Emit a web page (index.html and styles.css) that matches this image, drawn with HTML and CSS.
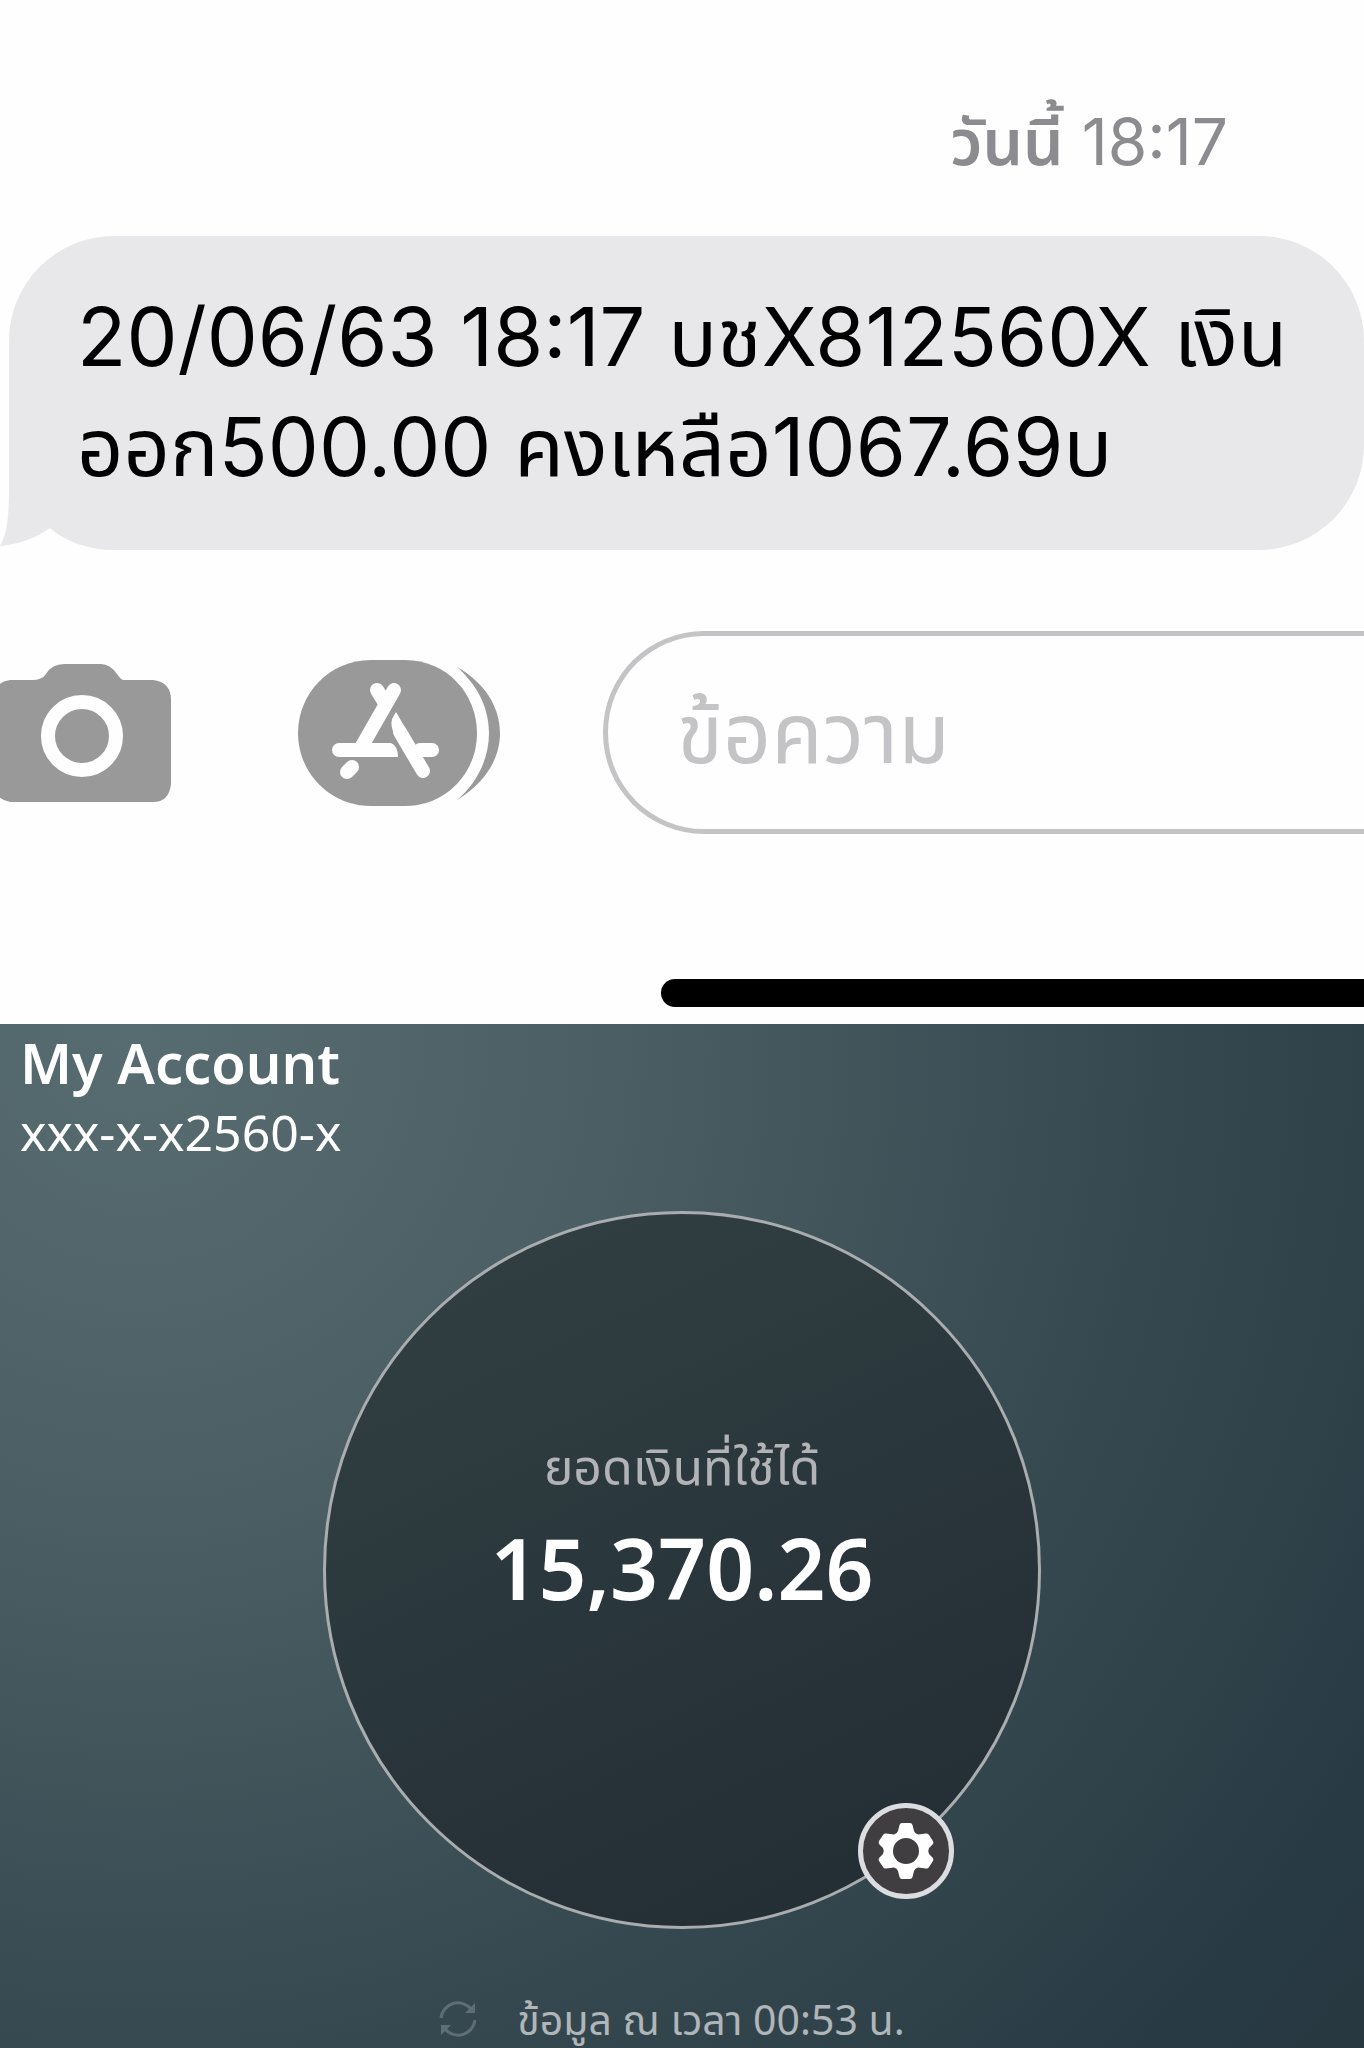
FILE: index.html
```
<!DOCTYPE html>
<html lang="th">
<head>
    <meta charset="UTF-8">
    <meta name="viewport" content="width=device-width, initial-scale=1.0">
    <title>My Account</title>
    <link rel="stylesheet" href="styles.css">
</head>
<body>

<section class="messages">
    <time class="message-time"><b>วันนี้</b> 18:17</time>

    <div class="bubble">
        <svg class="bubble-tail" viewBox="0 0 110 120" aria-hidden="true">
            <path d="M9 0V54C9 84 8 102 0 116C20 114 36 108 50 98C66 112 84 118 110 120V0Z"/>
        </svg>
        <p>20/06/63 18:17 บชX812560X เงิน<br>ออก500.00 คงเหลือ1067.69บ</p>
    </div>

    <form class="compose">
        <button type="button" class="icon-button" aria-label="Camera">
            <svg class="camera-icon" viewBox="0 0 171 146">
                <path d="M10 20H32Q42 20 46 14Q52 4 64 4H101Q110 4 117 14Q121 20 124 20H153Q171 22 171 40V124Q169 142 153 142H10Q-4 140-8 124V40Q-6 22 10 20Z"/>
                <ellipse class="camera-ring" cx="82" cy="76" rx="34" ry="34"/>
            </svg>
        </button>
        <button type="button" class="icon-button" aria-label="Apps">
            <svg class="apps-icon" viewBox="0 0 202 146">
                <path d="M73 0H107C149 0 179 34 179 73S149 146 107 146H73C31 146 0 112 0 73S31 0 73 0Z"/>
                <path d="M159 7C187 23 202 47 202 73S187 123 159 140C177 125 191 101 191 73S177 23 159 7Z"/>
                <g class="apps-lines">
                    <path d="M79 30L87 43M96 30L64 86"/>
                    <path d="M41 90H90M122 90H134"/>
                    <path d="M102 72L125 111"/>
                    <path d="M54 107L49 112"/>
                </g>
                <path class="apps-fill" d="M98 52L108 69L97 76Q92 66 94 59ZM88 83H93Q100 86 100 97H88Z"/>
            </svg>
        </button>
        <input class="message-input" type="text" placeholder="ข้อความ" aria-label="ข้อความ">
    </form>

    <div class="home-bar"></div>
</section>

<section class="account">
    <header>
        <h1>My Account</h1>
        <p class="account-number">xxx-x-x2560-x</p>
    </header>

    <div class="balance">
        <p class="balance-label">ยอดเงินที่ใช้ได้</p>
        <p class="balance-amount">15,370.26</p>
        <button type="button" class="settings" aria-label="Settings">
            <svg viewBox="0 0 60 60">
                <path d="M26 2H34Q36 2 36.500 4L38 10Q39 13 42 13.500L50 12.500Q52 12 53 14L57 20Q58 22 56.500 23.500L53 27Q51.500 30 53 33L56.500 36.500Q58 38 57 40L53 46Q52 48 50 47.500L42 46.500Q39 47 38 50L36.500 56Q36 58 34 58H26Q24 58 23.500 56L22 50Q21 47 18 46.500L10 47.500Q8 48 7 46L3 40Q2 38 3.500 36.500L7 33Q8.500 30 7 27L3.500 23.500Q2 22 3 20L7 14Q8 12 10 12.500L18 13.500Q21 13 22 10L23.500 4Q24 2 26 2Z"/>
                <circle class="gear-hole" cx="30" cy="30" r="13"/>
            </svg>
        </button>
    </div>

    <footer class="updated">
        <button type="button" class="refresh" aria-label="Refresh">
            <svg viewBox="0 0 38 38">
                <path class="refresh-arc" d="M2 18A17 17 0 0 1 32 9M36 20A17 17 0 0 1 6 29"/>
                <path d="M36 3V13H26ZM2 35V25H12Z"/>
            </svg>
        </button>
        <span>ข้อมูล ณ เวลา 00:53 น.</span>
    </footer>
</section>

</body>
</html>
```

FILE: styles.css
```
* {
    box-sizing: border-box;
}
body {
    margin: 0;
    min-height: 100vh;
    display: flex;
    flex-direction: column;
    overflow-x: hidden;
    background-color: #fefefe;
    font-family: Inter, "Noto Sans Thai", "Noto Sans", sans-serif;
}
h1, p {
    margin: 0;
}
button {
    padding: 0;
    border: none;
    background: none;
    cursor: pointer;
}
svg {
    display: block;
}

/* Messages */
.messages {
    display: flex;
    flex-direction: column;
    padding-top: 96px;
}
.message-time {
    align-self: flex-end;
    margin-right: 136px;
    color: #8b8b90;
    font-size: 64px;
    line-height: 92px;
}
.message-time b {
    font-weight: 600;
}
.bubble {
    position: relative;
    margin: 48px 0 81px 9px;
    padding: 46px 0 48px 68px;
    border-radius: 105px;
    background-color: #e8e8ea;
    color: #000;
    font-size: 81px;
    line-height: 110px;
    white-space: nowrap;
}
.bubble-tail {
    position: absolute;
    left: -9px;
    bottom: 0;
    width: 110px;
    height: 120px;
    fill: #e8e8ea;
}
.bubble p {
    position: relative;
}
.compose {
    display: flex;
    align-items: center;
}
.icon-button {
    flex: none;
    fill: #999;
}
.camera-icon {
    width: 171px;
    height: 146px;
}
.camera-ring {
    fill: none;
    stroke: #fefefe;
    stroke-width: 14;
}
.apps-icon {
    width: 202px;
    height: 146px;
    margin: 0 103px 0 127px;
}
.apps-lines {
    fill: none;
    stroke: #fefefe;
    stroke-width: 14;
    stroke-linecap: round;
}
.apps-fill {
    fill: #fefefe;
}
.message-input {
    flex: 1;
    min-width: 0;
    height: 203px;
    padding: 0 0 0 69px;
    border: 5px solid #c4c4c6;
    border-right: none;
    border-radius: 101px 0 0 101px;
    background: none;
    font-family: inherit;
    font-size: 84px;
}
.message-input::placeholder {
    color: #c4c4c6;
    opacity: 1;
}
.home-bar {
    width: 703px;
    height: 28px;
    margin: 145px 0 17px;
    align-self: flex-end;
    border-radius: 14px 0 0 14px;
    background-color: #000;
}

/* Account */
.account {
    flex: 1;
    display: flex;
    flex-direction: column;
    background: radial-gradient(circle farthest-corner at 10% 2%, #576c71 0%, #4b5e64 30%, #36484f 65%, #283a43 90%, #273841 100%);
    color: #fff;
    font-family: "Noto Sans", "Noto Sans Thai", sans-serif;
}
.account header {
    padding: 2px 20px 0;
}
h1 {
    font-size: 56px;
    font-weight: 600;
    line-height: 72px;
}
.account-number {
    font-size: 50px;
    line-height: 68px;
}
.balance {
    position: relative;
    align-self: center;
    width: 718px;
    height: 718px;
    margin-top: 45px;
    padding-top: 204px;
    border: 3px solid #a9adb0;
    border-radius: 50%;
    background: linear-gradient(155deg, #344143 0%, #2a373c 45%, #222c33 100%);
    text-align: center;
}
.balance-label {
    color: #b2b3b6;
    font-size: 50px;
    line-height: 96px;
}
.balance-amount {
    font-size: 84px;
    font-weight: 600;
    line-height: 108px;
}
.settings {
    position: absolute;
    right: 84px;
    bottom: 27px;
    width: 96px;
    height: 96px;
    padding: 13px;
    border: 5px solid #dcdde0;
    border-radius: 50%;
    background-color: #403e41;
    fill: #fff;
}
.gear-hole {
    fill: #403e41;
}
.updated {
    display: flex;
    justify-content: center;
    align-items: center;
    gap: 40px;
    margin-top: 62px;
    padding-right: 20px;
    color: #b0b5b9;
    font-size: 41px;
    line-height: 56px;
}
.refresh {
    fill: #5f6e75;
}
.refresh svg {
    width: 38px;
    height: 38px;
}
.refresh-arc {
    fill: none;
    stroke: #5f6e75;
    stroke-width: 3;
}
```
